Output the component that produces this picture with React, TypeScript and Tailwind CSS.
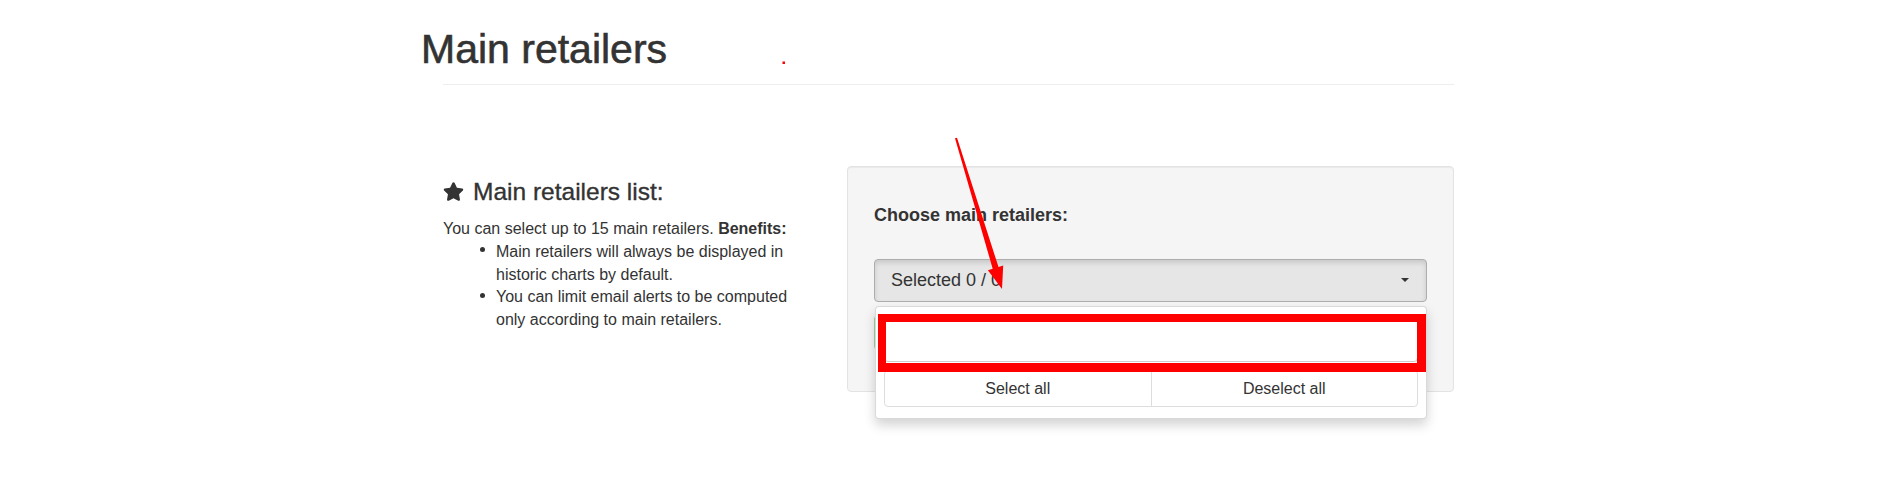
import { FaStar } from 'react-icons/fa';

const Arrow = () => (
  <svg
    className="pointer-events-none absolute left-0 top-0 z-20"
    width={1890}
    height={482}
    viewBox="0 0 1890 482"
  >
    <polygon
      fill="#ff0000"
      points="955.0,138.3 957.0,137.7 998.5,267.1 1003.2,265.6 1002,289 987.9,270.3 992.7,268.8"
    />
    <rect x={782.5} y={61.5} width={2.5} height={2.5} fill="#ff0000" />
  </svg>
);

const Benefits = () => (
  <div className="w-[363px] pt-[11.5px] text-[#333]">
    <h3 className="flex items-center gap-[9px] text-[24.5px] leading-[28px] [-webkit-text-stroke:0.35px_#333]">
      <FaStar size={21} />
      Main retailers list:
    </h3>
    <p className="mt-[12.5px] text-[16px] leading-[22.75px]">
      You can select up to 15 main retailers. <b>Benefits:</b>
    </p>
    <ul className="pl-[33px] text-[16px] leading-[22.75px]">
      {[
        'Main retailers will always be displayed in historic charts by default.',
        'You can limit email alerts to be computed only according to main retailers.',
      ].map((t) => (
        <li key={t} className="flex">
          <span className="w-[20px] shrink-0 pl-[3.5px]">
            <span className="mt-[6.5px] block h-[5px] w-[5px] rounded-full bg-[#333]" />
          </span>
          <span>{t}</span>
        </li>
      ))}
    </ul>
  </div>
);

const RetailerPicker = () => (
  <div className="ml-[41px] h-[226px] w-[607px] rounded-[4px] border border-[#e3e3e3] bg-[#f5f5f5] px-[26px] pt-[35px] text-[#333] shadow-[inset_0_1px_1px_rgba(0,0,0,0.05)]">
    <label className="block text-[18px] font-bold leading-[26px]">Choose main retailers:</label>
    <div className="relative mt-[30.5px]">
      <button className="flex h-[43px] w-full items-center justify-between rounded-[4px] border border-[#adadad] bg-[#e6e6e6] pl-[16px] pr-[17px] text-[18px] leading-[26px] text-[#333] shadow-[inset_0_3px_5px_rgba(0,0,0,0.125)]">
        <span>Selected 0 / 0</span>
        <span className="h-0 w-0 border-x-[4px] border-t-[4px] border-x-transparent border-t-[#333]" />
      </button>
      <div className="absolute left-[1px] right-0 top-[calc(100%+4.5px)] z-10 rounded-[4px] border border-[rgba(0,0,0,0.15)] bg-white px-[8px] pb-[11px] pt-[9px] shadow-[0_6px_12px_rgba(0,0,0,0.175)]">
        <input className="block h-[46px] w-full rounded-[4px] border border-[#ccc] bg-white outline-none" />
        <div className="mt-[8px] flex h-[37px] text-[16px] text-[#333]">
          <button className="flex-1 rounded-l-[4px] border border-[#ddd] bg-white">Select all</button>
          <button className="-ml-px flex-1 rounded-r-[4px] border border-[#ddd] bg-white">Deselect all</button>
        </div>
        <div className="absolute left-[1.5px] top-[7px] h-[58px] w-[548.5px] border-b-[9px] border-l-[8px] border-r-[9px] border-t-[8px] border-[#ff0000]" />
      </div>
    </div>
    <button className="mt-[13.5px] h-[35px] w-[90px] rounded-[4px] border border-[#9fd49f] bg-[#8fcf8f] text-[16px] text-white">
      Save
    </button>
  </div>
);

const App = () => (
  <div className="relative h-[482px] w-full overflow-hidden bg-white font-['Liberation_Sans',Arial,sans-serif] text-[#333]">
    <Arrow />
    <h1 className="pl-[421px] pt-[27px] text-[41px] font-normal leading-[45px] [-webkit-text-stroke:0.6px_#333]">
      Main retailers
    </h1>
    <div className="ml-[443px] mt-[12px] w-[1011px] border-t border-[#eee]" />
    <div className="ml-[443px] mt-[81px] flex items-start">
      <Benefits />
      <RetailerPicker />
    </div>
  </div>
);

export default App;
